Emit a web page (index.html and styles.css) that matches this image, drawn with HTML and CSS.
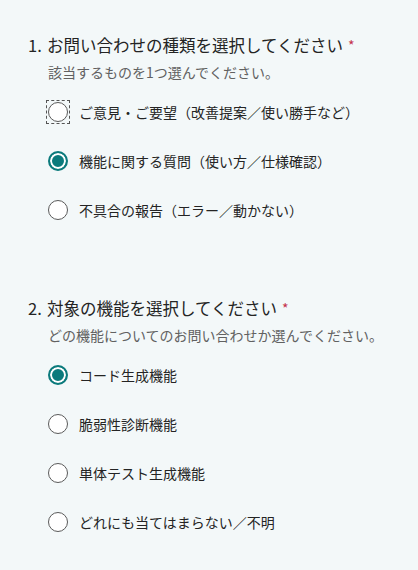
FILE: index.html
```html
<!DOCTYPE html>
<html lang="ja">
<head>
<meta charset="utf-8">
<link rel="stylesheet" href="styles.css">
</head>
<body>
<div class="form">
  <section class="question">
    <div class="q-title"><span class="q-num">1.</span><span class="q-text">お問い合わせの種類を選択してください</span><span class="req">*</span></div>
    <div class="q-sub">該当するものを1つ選んでください。</div>
    <div class="options">
      <div class="option"><span class="focus"><span class="radio"></span></span><span class="opt-text">ご意見・ご要望（改善提案／使い勝手など）</span></div>
      <div class="option"><span class="focus nofocus"><span class="radio checked"></span></span><span class="opt-text">機能に関する質問（使い方／仕様確認）</span></div>
      <div class="option"><span class="focus nofocus"><span class="radio"></span></span><span class="opt-text">不具合の報告（エラー／動かない）</span></div>
    </div>
  </section>
  <section class="question second">
    <div class="q-title"><span class="q-num">2.</span><span class="q-text">対象の機能を選択してください</span><span class="req">*</span></div>
    <div class="q-sub">どの機能についてのお問い合わせか選んでください。</div>
    <div class="options">
      <div class="option"><span class="focus nofocus"><span class="radio checked"></span></span><span class="opt-text">コード生成機能</span></div>
      <div class="option"><span class="focus nofocus"><span class="radio"></span></span><span class="opt-text">脆弱性診断機能</span></div>
      <div class="option"><span class="focus nofocus"><span class="radio"></span></span><span class="opt-text">単体テスト生成機能</span></div>
      <div class="option"><span class="focus nofocus"><span class="radio"></span></span><span class="opt-text">どれにも当てはまらない／不明</span></div>
    </div>
  </section>
</div>
</body>
</html>
```
FILE: styles.css
```css
html, body {
  margin: 0;
  padding: 0;
  background: #f3f8f9;
}
body {
  font-family: "Noto Sans CJK JP", "Noto Sans", sans-serif;
  color: #242424;
}
.form {
  padding: 33px 20px 0 28px;
}
.question.second {
  margin-top: 62px;
}
.q-title {
  display: flex;
  align-items: baseline;
  font-size: 16.5px;
  line-height: 24px;
  color: #242424;
}
.q-num {
  width: 19px;
  flex: none;
}
.req {
  color: #c4314b;
  font-size: 14px;
  margin-left: 5px;
  position: relative;
  top: -1px;
}
.q-sub {
  margin-top: 4px;
  margin-left: 20px;
  font-size: 14px;
  line-height: 20px;
  color: #616161;
}
.options {
  margin-top: 5px;
  display: flex;
  flex-direction: column;
}
.option {
  display: flex;
  align-items: center;
  height: 49px;
  padding-left: 18px;
  gap: 9px;
}
.focus {
  display: flex;
  align-items: center;
  justify-content: center;
  width: 24px;
  height: 24px;
  box-sizing: border-box;
  border: 1px dashed #555;
}
.focus.nofocus {
  border-color: transparent;
}
.radio {
  display: block;
  width: 20px;
  height: 20px;
  box-sizing: border-box;
  border-radius: 50%;
  border: 1px solid #5a5a5a;
  background: #fff;
}
.radio.checked {
  border: 2px solid #0b7a7c;
  background: #0b7a7c;
  box-shadow: inset 0 0 0 2px #fff;
}
.opt-text {
  font-size: 14px;
  line-height: 20px;
  color: #242424;
}
```
